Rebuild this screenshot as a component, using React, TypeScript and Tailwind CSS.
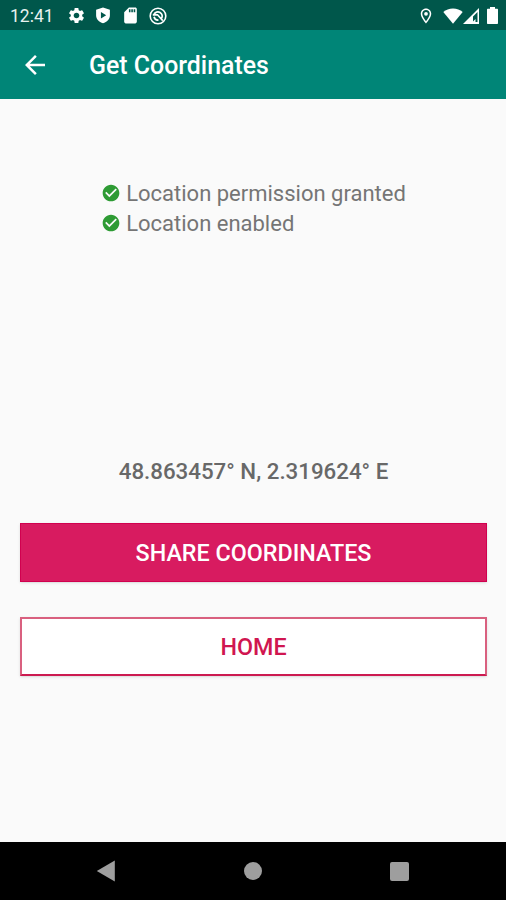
import React from "react";
import {
  MdArrowBack,
  MdCheckCircle,
  MdOutlineLocationOn,
  MdSdCard,
  MdSettings,
} from "react-icons/md";

const StatusBar = () => {
  return (
    <div className="h-[30px] shrink-0 bg-[#00574b] text-white flex items-center pl-[10px] pr-[7px] pt-px">
      <span className="w-[57px] mt-[2px] text-[17.5px] leading-none text-[#e8f1ef]">
        12:41
      </span>
      <MdSettings size={19} className="-mt-px" />
      <svg viewBox="0 0 16 18" className="ml-[9px] w-4 h-[17px]">
        <path
          fillRule="evenodd"
          fill="currentColor"
          d="M8 0.500 15.300 3v6c0 4-3 6.800-7.300 8.300C3.700 15.800 0.700 13 0.700 9V3L8 0.500ZM5.800 5.200v7l5.600-3.500-5.600-3.500Z"
        />
      </svg>
      <MdSdCard size={19} className="ml-[10px]" />
      <svg
        viewBox="0 0 18 18"
        fill="none"
        stroke="currentColor"
        className="ml-[9px] w-[18px] h-[18px]"
      >
        <circle cx="9" cy="9" r="7.800" strokeWidth="1.600" />
        <path
          strokeWidth="1.700"
          d="M5 7.400A4.300 4.300 0 1 1 12.400 11.700M5 9.800A4.200 4.200 0 0 0 9.500 13M3.800 7.800H8.500L13.800 13.600"
        />
      </svg>
      <MdOutlineLocationOn size={18} className="ml-auto" />
      <svg viewBox="0 0 20 16" className="ml-[8px] w-5 h-4">
        <path
          fill="currentColor"
          d="M10 15.700 0.300 4C2.900 1.800 6.200 0.500 10 0.500s7.100 1.300 9.700 3.500L10 15.700Z"
        />
      </svg>
      <svg viewBox="0 0 16 16" className="w-4 h-4">
        <path
          fillRule="evenodd"
          fill="currentColor"
          d="M16 0v16H0L16 0ZM14.500 4l-4.500 4.500v5l2.500-2.500v3h2V4Z"
        />
      </svg>
      <svg viewBox="0 0 11 17" className="ml-[8px] mr-px w-[11px] h-[17px]">
        <path
          fill="currentColor"
          d="M3 0h5v1.800h2c.6 0 1 .4 1 1V16c0 .6-.4 1-1 1H1c-.6 0-1-.4-1-1V2.800c0-.6.4-1 1-1h2V0Z"
        />
      </svg>
    </div>
  );
};

const StatusLine = ({ text }: { text: string }) => {
  return (
    <li className="flex items-center h-[30px]">
      <MdCheckCircle size={20} className="text-[#2e9b34] mr-[5px] -mt-px" />
      <span>{text}</span>
    </li>
  );
};

const NavBar = () => {
  return (
    <nav className="h-[58px] shrink-0 bg-black text-[#9e9e9e] flex items-center justify-between pl-[96px] pr-[97px]">
      <svg viewBox="0 0 19 22" className="w-[19px] h-[22px]">
        <path fill="currentColor" d="M0.800 11 18.800 0.500v21L0.800 11Z" />
      </svg>
      <span className="w-[18px] h-[18px] ml-px rounded-full bg-[#9e9e9e]" />
      <span className="w-[19px] h-[19px] rounded-[2px] bg-[#9e9e9e]" />
    </nav>
  );
};

const App = () => {
  return (
    <div className="w-[506px] h-[900px] flex flex-col overflow-hidden bg-[#fafafa] font-['Roboto',sans-serif]">
      <StatusBar />
      <header className="h-[69px] shrink-0 bg-[#008577] text-white flex items-center px-5">
        <MdArrowBack size={30} />
        <h1 className="ml-[39px] mt-1 text-[24.9px] font-medium leading-none">
          Get Coordinates
        </h1>
      </header>
      <main className="flex-1 flex flex-col pl-5 pr-[19px] pt-[79px]">
        <ul className="self-center text-[22px] text-[#757575]">
          <StatusLine text="Location permission granted" />
          <StatusLine text="Location enabled" />
        </ul>
        <p className="mt-[218px] text-center text-[22.3px] leading-[30px] font-medium text-[#686868]">
          48.863457° N, 2.319624° E
        </p>
        <button className="mt-[37px] h-[59px] pt-px bg-[#d81b60] border border-[#d1004f] text-white text-[23.3px] font-medium shadow-sm">
          SHARE COORDINATES
        </button>
        <button className="mt-[35px] h-[59px] pt-px bg-white border-2 border-[#d9607f] border-b-[#cc1a50] text-[#d01650] text-[23.3px] font-medium shadow-sm">
          HOME
        </button>
      </main>
      <NavBar />
    </div>
  );
};

export default App;
